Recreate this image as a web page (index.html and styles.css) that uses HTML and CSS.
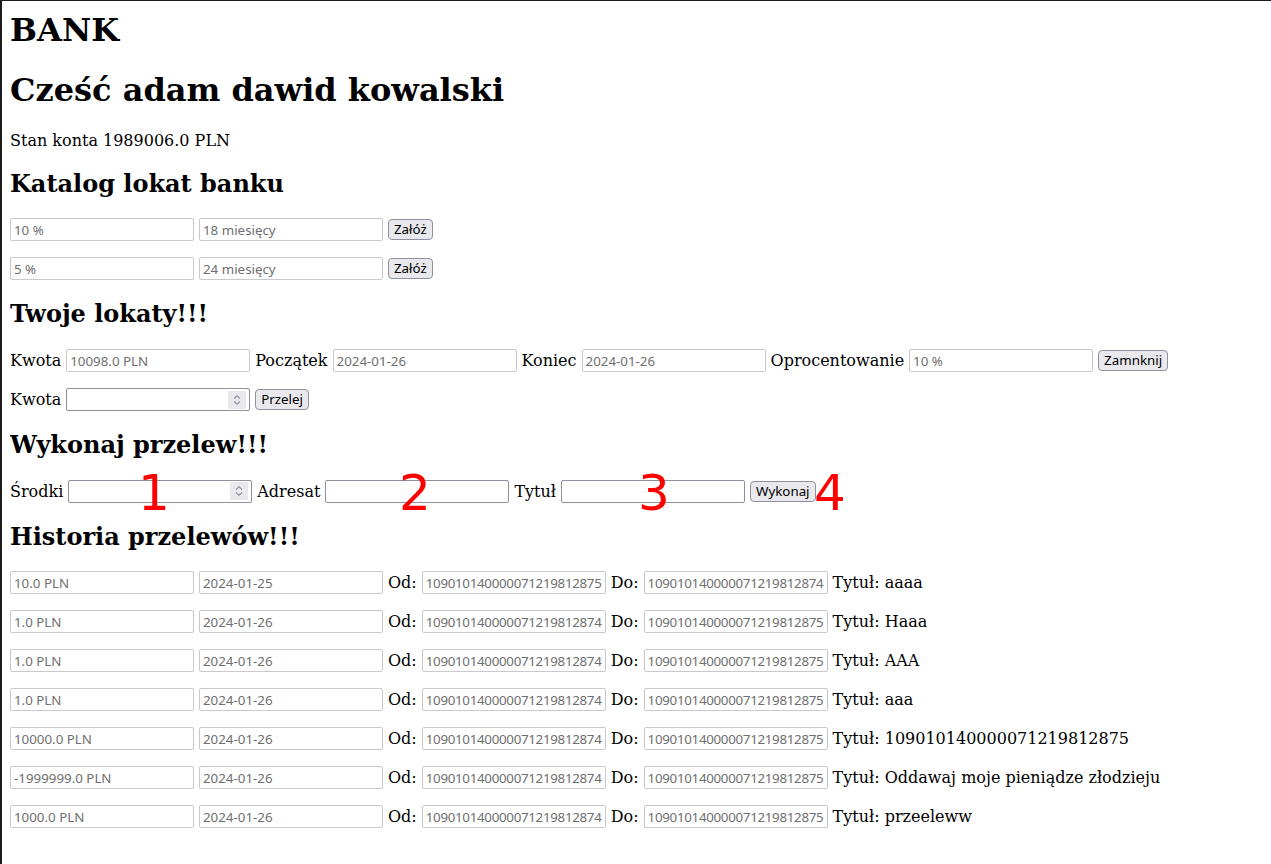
FILE: index.html
```html
<!DOCTYPE html>
<html lang="pl">
<head>
<meta charset="utf-8">
<title>BANK</title>
<link rel="stylesheet" href="styles.css">
</head>
<body>
<h1 class="brand">BANK</h1>
<h1>Cześć adam dawid kowalski</h1>
<p>Stan konta 1989006.0 PLN</p>

<h2>Katalog lokat banku</h2>
<form class="row">
  <input class="field field--ro" readonly value="10 %">
  <input class="field field--ro" readonly value="18 miesięcy">
  <button class="btn" type="button">Załóż</button>
</form>
<form class="row">
  <input class="field field--ro" readonly value="5 %">
  <input class="field field--ro" readonly value="24 miesięcy">
  <button class="btn" type="button">Załóż</button>
</form>

<h2>Twoje lokaty!!!</h2>
<form class="row">
  <span class="label">Kwota</span>
  <input class="field field--ro" readonly value="10098.0 PLN">
  <span class="label">Początek</span>
  <input class="field field--ro" readonly value="2024-01-26">
  <span class="label">Koniec</span>
  <input class="field field--ro" readonly value="2024-01-26">
  <span class="label">Oprocentowanie</span>
  <input class="field field--ro" readonly value="10 %">
  <button class="btn" type="button">Zamnknij</button>
</form>
<form class="row">
  <span class="label">Kwota</span>
  <span class="num">
    <input class="num__input" type="text" aria-label="Kwota">
    <span class="spin"><svg width="18" height="18" viewBox="0 0 18 18"><path d="M6 7.5 9 4.8 12 7.5M6 10.5 9 13.2 12 10.5" fill="none" stroke="#8f8f9d" stroke-width="1.1"/></svg></span>
  </span>
  <button class="btn" type="button">Przelej</button>
</form>

<h2>Wykonaj przelew!!!</h2>
<form class="row row--annot">
  <span class="label">Środki</span>
  <span class="num">
    <input class="num__input" type="text" aria-label="Środki">
    <span class="spin"><svg width="18" height="18" viewBox="0 0 18 18"><path d="M6 7.5 9 4.8 12 7.5M6 10.5 9 13.2 12 10.5" fill="none" stroke="#8f8f9d" stroke-width="1.1"/></svg></span>
  </span>
  <span class="label">Adresat</span>
  <input class="field" type="text" aria-label="Adresat">
  <span class="label">Tytuł</span>
  <input class="field" type="text" aria-label="Tytuł">
  <button class="btn" type="button">Wykonaj</button>
  <span class="mark mark--1">1</span>
  <span class="mark mark--2">2</span>
  <span class="mark mark--3">3</span>
  <span class="mark mark--4">4</span>
</form>

<h2>Historia przelewów!!!</h2>
<form class="row">
  <input class="field field--ro" readonly value="10.0 PLN">
  <input class="field field--ro" readonly value="2024-01-25">
  <span class="label">Od:</span>
  <input class="field field--ro field--acct" readonly value="109010140000071219812875">
  <span class="label">Do:</span>
  <input class="field field--ro field--acct" readonly value="109010140000071219812874">
  <span class="label">Tytuł: aaaa</span>
</form>
<form class="row">
  <input class="field field--ro" readonly value="1.0 PLN">
  <input class="field field--ro" readonly value="2024-01-26">
  <span class="label">Od:</span>
  <input class="field field--ro field--acct" readonly value="109010140000071219812874">
  <span class="label">Do:</span>
  <input class="field field--ro field--acct" readonly value="109010140000071219812875">
  <span class="label">Tytuł: Haaa</span>
</form>
<form class="row">
  <input class="field field--ro" readonly value="1.0 PLN">
  <input class="field field--ro" readonly value="2024-01-26">
  <span class="label">Od:</span>
  <input class="field field--ro field--acct" readonly value="109010140000071219812874">
  <span class="label">Do:</span>
  <input class="field field--ro field--acct" readonly value="109010140000071219812875">
  <span class="label">Tytuł: AAA</span>
</form>
<form class="row">
  <input class="field field--ro" readonly value="1.0 PLN">
  <input class="field field--ro" readonly value="2024-01-26">
  <span class="label">Od:</span>
  <input class="field field--ro field--acct" readonly value="109010140000071219812874">
  <span class="label">Do:</span>
  <input class="field field--ro field--acct" readonly value="109010140000071219812875">
  <span class="label">Tytuł: aaa</span>
</form>
<form class="row">
  <input class="field field--ro" readonly value="10000.0 PLN">
  <input class="field field--ro" readonly value="2024-01-26">
  <span class="label">Od:</span>
  <input class="field field--ro field--acct" readonly value="109010140000071219812874">
  <span class="label">Do:</span>
  <input class="field field--ro field--acct" readonly value="109010140000071219812875">
  <span class="label">Tytuł: 109010140000071219812875</span>
</form>
<form class="row">
  <input class="field field--ro" readonly value="-1999999.0 PLN">
  <input class="field field--ro" readonly value="2024-01-26">
  <span class="label">Od:</span>
  <input class="field field--ro field--acct" readonly value="109010140000071219812874">
  <span class="label">Do:</span>
  <input class="field field--ro field--acct" readonly value="109010140000071219812875">
  <span class="label">Tytuł: Oddawaj moje pieniądze złodzieju</span>
</form>
<form class="row">
  <input class="field field--ro" readonly value="1000.0 PLN">
  <input class="field field--ro" readonly value="2024-01-26">
  <span class="label">Od:</span>
  <input class="field field--ro field--acct" readonly value="109010140000071219812874">
  <span class="label">Do:</span>
  <input class="field field--ro field--acct" readonly value="109010140000071219812875">
  <span class="label">Tytuł: przeeleww</span>
</form>
</body>
</html>
```

FILE: styles.css
```css
html {
  box-sizing: border-box;
  min-height: 100%;
  border-top: 1px solid #1c1c1c;
  border-left: 2px solid #1c1c1c;
  background: #fff;
}

body {
  margin: 0 8px 8px;
  padding-top: 1px;
  font-family: "DejaVu Serif", serif;
  font-size: 16px;
  line-height: 1.2;
  color: #000;
}

h1 {
  font-size: 32px;
  font-weight: bold;
  margin: 21.44px 0;
}

h1.brand {
  margin-top: 9px;
}

h2 {
  font-size: 24px;
  font-weight: bold;
  margin: 19.92px 0;
}

p {
  margin: 16px 0;
}

.row {
  position: relative;
  display: flex;
  align-items: center;
  gap: 5px;
  height: 23px;
  margin: 16px 0;
}

.label {
  white-space: nowrap;
}

.field {
  box-sizing: border-box;
  flex: none;
  width: 184px;
  height: 23px;
  margin: 0;
  padding: 0 2px 0 3px;
  border: 1px solid #8f8f9d;
  border-radius: 2px;
  background: #fff;
  font-family: "Noto Sans", sans-serif;
  font-size: 13.33px;
  color: #000;
  outline: none;
}

.field--ro {
  border-color: #c9c9cd;
  color: #6f6f6f;
}

.field--acct {
  letter-spacing: -0.3px;
}

.num {
  box-sizing: border-box;
  flex: none;
  display: inline-flex;
  align-items: center;
  width: 184px;
  height: 23px;
  padding: 0 3px 0 2px;
  border: 1px solid #8f8f9d;
  border-radius: 2px;
  background: #fff;
}

.num__input {
  flex: 1;
  min-width: 0;
  height: 19px;
  margin: 0;
  padding: 0;
  border: 0;
  outline: none;
  font-family: "Noto Sans", sans-serif;
  font-size: 13.33px;
  background: transparent;
}

.spin {
  display: flex;
  width: 18px;
  height: 18px;
  background: #e9e9ed;
}

.btn {
  flex: none;
  box-sizing: border-box;
  height: 21px;
  margin: 0;
  padding: 0 5px;
  border: 1px solid #8f8f9d;
  border-radius: 4px;
  background: #e9e9ed;
  font-family: "Noto Sans", sans-serif;
  font-size: 13.33px;
  line-height: 19px;
  color: #000;
}

.mark {
  position: absolute;
  top: -12px;
  font-family: "DejaVu Sans", sans-serif;
  font-size: 50px;
  line-height: 1;
  color: #ff0000;
  pointer-events: none;
}

.mark--1 { left: 128px; }
.mark--2 { left: 389px; }
.mark--3 { left: 628px; }
.mark--4 { left: 804px; }
```
